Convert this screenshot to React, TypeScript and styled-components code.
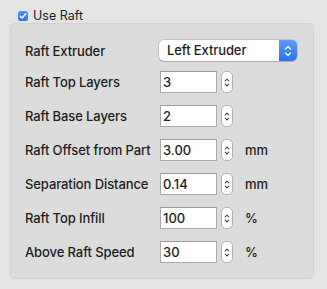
import styled, { createGlobalStyle } from "styled-components";

const Global = createGlobalStyle`
  html, body { margin: 0; padding: 0; background: #e4e4e4; }
  body {
    font-family: Inter, Roboto, "Liberation Sans", sans-serif;
    color: #1d1d1d;
    -webkit-font-smoothing: antialiased;
  }
`;

const Page = styled.div`
  width: 327px;
  height: 289px;
  box-sizing: border-box;
  padding: 9px 13px 10px 10px;
  display: flex;
  flex-direction: column;
`;

const CheckRow = styled.label`
  display: flex;
  align-items: center;
  gap: 5px;
  margin-left: 8px;
  height: 13px;
  font-size: 12.5px;
  font-weight: 400;
`;

const CheckBox = styled.span`
  width: 10px;
  height: 10px;
  border-radius: 2.5px;
  background: linear-gradient(#4f94f8, #2a74ee);
  display: flex;
  align-items: center;
  justify-content: center;
`;

const Panel = styled.div`
  margin-top: 1px;
  flex: 1;
  background: #dcdcdc;
  border: 1px solid #d2d2d2;
  border-radius: 5px;
  padding: 16px 0 15px 14px;
  display: flex;
  flex-direction: column;
  gap: 12px;
`;

const Row = styled.div<{ $first?: boolean }>`
  display: grid;
  grid-template-columns: 135px auto;
  align-items: center;
  height: ${(p) => (p.$first ? "21px" : "22px")};
  margin-bottom: ${(p) => (p.$first ? "-2px" : "0")};
`;

const Label = styled.span`
  font-size: 13px;
  font-weight: 450;
  letter-spacing: -0.1px;
`;

const Controls = styled.div`
  display: flex;
  align-items: center;
`;

const Select = styled.div`
  width: 138px;
  height: 21px;
  box-sizing: border-box;
  margin-left: -1px;
  border-radius: 5px;
  background: #fff;
  box-shadow: 0 0 0 0.5px rgba(0, 0, 0, 0.22), 0 1px 1px rgba(0, 0, 0, 0.12);
  display: flex;
  overflow: hidden;
`;

const SelectText = styled.span`
  flex: 1;
  padding-left: 8px;
  font-size: 13px;
  font-weight: 450;
  letter-spacing: -0.1px;
  line-height: 21px;
`;

const SelectArrow = styled.span`
  width: 18px;
  background: linear-gradient(#5b9cf8, #2a72ee);
  display: flex;
  align-items: center;
  justify-content: center;
`;

const NumberBox = styled.div`
  width: 57px;
  height: 22px;
  box-sizing: border-box;
  background: #fff;
  border: 1px solid #a9a9a9;
  border-top-color: #999;
  padding-left: 2px;
  font-size: 13px;
  font-weight: 450;
  line-height: 20px;
`;

const Stepper = styled.div`
  margin-left: 4px;
  width: 12px;
  height: 22px;
  box-sizing: border-box;
  border-radius: 5px;
  background: #fff;
  border: 1px solid #b3b3b3;
  display: flex;
  align-items: center;
  justify-content: center;
`;

const Unit = styled.span`
  margin-left: 12px;
  font-size: 13px;
  font-weight: 450;
`;

const Chevrons = ({ color, w, h, sw }: { color: string; w: number; h: number; sw: number }) => (
  <svg width={w} height={h} viewBox="0 0 8 14" fill="none">
    <path d="M1.5 5 L4 2.5 L6.5 5" stroke={color} strokeWidth={sw} strokeLinecap="round" strokeLinejoin="round" />
    <path d="M1.5 9 L4 11.5 L6.5 9" stroke={color} strokeWidth={sw} strokeLinecap="round" strokeLinejoin="round" />
  </svg>
);

const fields = [
  { label: "Raft Top Layers", value: "3" },
  { label: "Raft Base Layers", value: "2" },
  { label: "Raft Offset from Part", value: "3.00", unit: "mm" },
  { label: "Separation Distance", value: "0.14", unit: "mm" },
  { label: "Raft Top Infill", value: "100", unit: "%" },
  { label: "Above Raft Speed", value: "30", unit: "%" },
];

export default function App() {
  return (
    <Page>
      <Global />
      <CheckRow>
        <CheckBox>
          <svg width="8" height="8" viewBox="0 0 8 8" fill="none">
            <path d="M1.3 4.2 L3.2 6 L6.8 1.8" stroke="#fff" strokeWidth="1.4" strokeLinecap="round" strokeLinejoin="round" />
          </svg>
        </CheckBox>
        Use Raft
      </CheckRow>
      <Panel>
        <Row $first>
          <Label>Raft Extruder</Label>
          <Select>
            <SelectText>Left Extruder</SelectText>
            <SelectArrow>
              <Chevrons color="#fff" w={8} h={14} sw={1.3} />
            </SelectArrow>
          </Select>
        </Row>
        {fields.map((f) => (
          <Row key={f.label}>
            <Label>{f.label}</Label>
            <Controls>
              <NumberBox>{f.value}</NumberBox>
              <Stepper>
                <Chevrons color="#3a3a3a" w={6} h={15} sw={1.4} />
              </Stepper>
              {f.unit && <Unit>{f.unit}</Unit>}
            </Controls>
          </Row>
        ))}
      </Panel>
    </Page>
  );
}
